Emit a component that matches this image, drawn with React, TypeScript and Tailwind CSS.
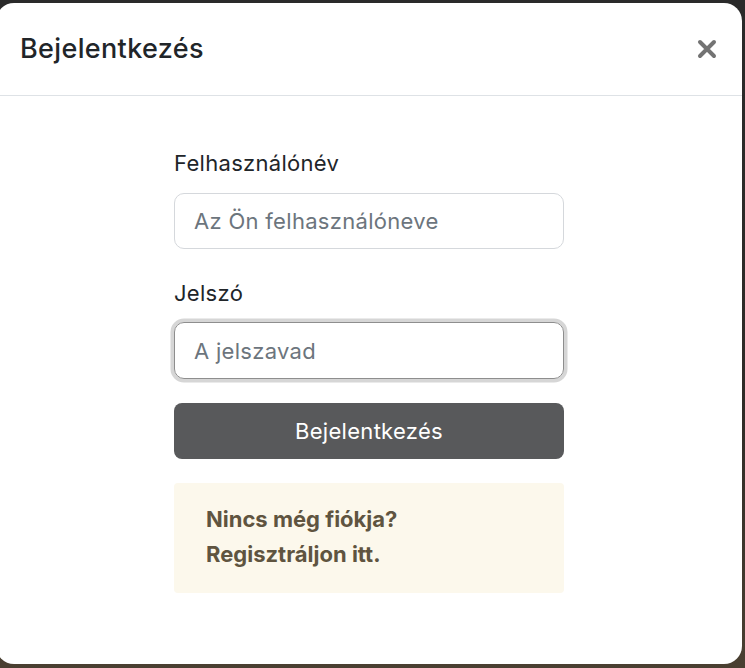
export default function App() {
  return (
    <div
      className="h-[668px] w-[745px] overflow-hidden bg-[linear-gradient(180deg,#2a2a2a_0%,#2f2b27_60%,#4a3f31_100%)] pt-[3px]"
      style={{ fontFamily: "Inter, 'Noto Sans', sans-serif" }}
    >
      <div className="ml-[-4px] flex h-[661px] w-[746px] flex-col rounded-[18px] bg-white">
        <div className="flex h-[93px] items-center justify-between border-b border-[#dee2e6] pl-6 pr-[25px]">
          <h1 className="text-[27px] font-medium tracking-[0.35px] text-[#212529]">Bejelentkezés</h1>
          <button className="text-[#737373]" aria-label="Bezárás">
            <svg width="20" height="20" viewBox="0 0 20 20">
              <path d="M3 3 L17 17 M17 3 L3 17" stroke="currentColor" strokeWidth="4" strokeLinecap="round" />
            </svg>
          </button>
        </div>
        <div className="mx-auto w-[390px] pt-[52px]">
          <label className="block text-[22px] leading-[30px] tracking-[0.3px] text-[#212529]">Felhasználónév</label>
          <input
            className="mt-[15px] block h-[56px] w-full rounded-[10px] border border-[#d5d8dc] px-[19px] text-[22px] tracking-[0.3px] text-[#212529] outline-none placeholder:text-[#6c757d]"
            placeholder="Az Ön felhasználóneve"
          />
          <label className="mt-[29px] block text-[22px] leading-[30px] tracking-[0.3px] text-[#212529]">Jelszó</label>
          <input
            type="password"
            className="mt-[14px] block h-[57px] w-full rounded-[10px] border border-[#8e8e8e] px-[19px] text-[22px] tracking-[0.3px] text-[#212529] shadow-[0_0_0_3.5px_#d6d6d6] outline-none placeholder:text-[#6c757d]"
            placeholder="A jelszavad"
          />
          <button className="mt-[24px] block h-[56px] w-full rounded-[8px] bg-[#58595b] text-[22px] tracking-[0.3px] text-white">
            Bejelentkezés
          </button>
          <div className="mt-[24px] h-[110px] rounded-[4px] bg-[#fcf8ec] px-[32px] pt-[19px] text-[22px] font-bold leading-[35px] text-[#5f5440]">
            <p>Nincs még fiókja?</p>
            <p>Regisztráljon itt.</p>
          </div>
        </div>
      </div>
    </div>
  );
}
